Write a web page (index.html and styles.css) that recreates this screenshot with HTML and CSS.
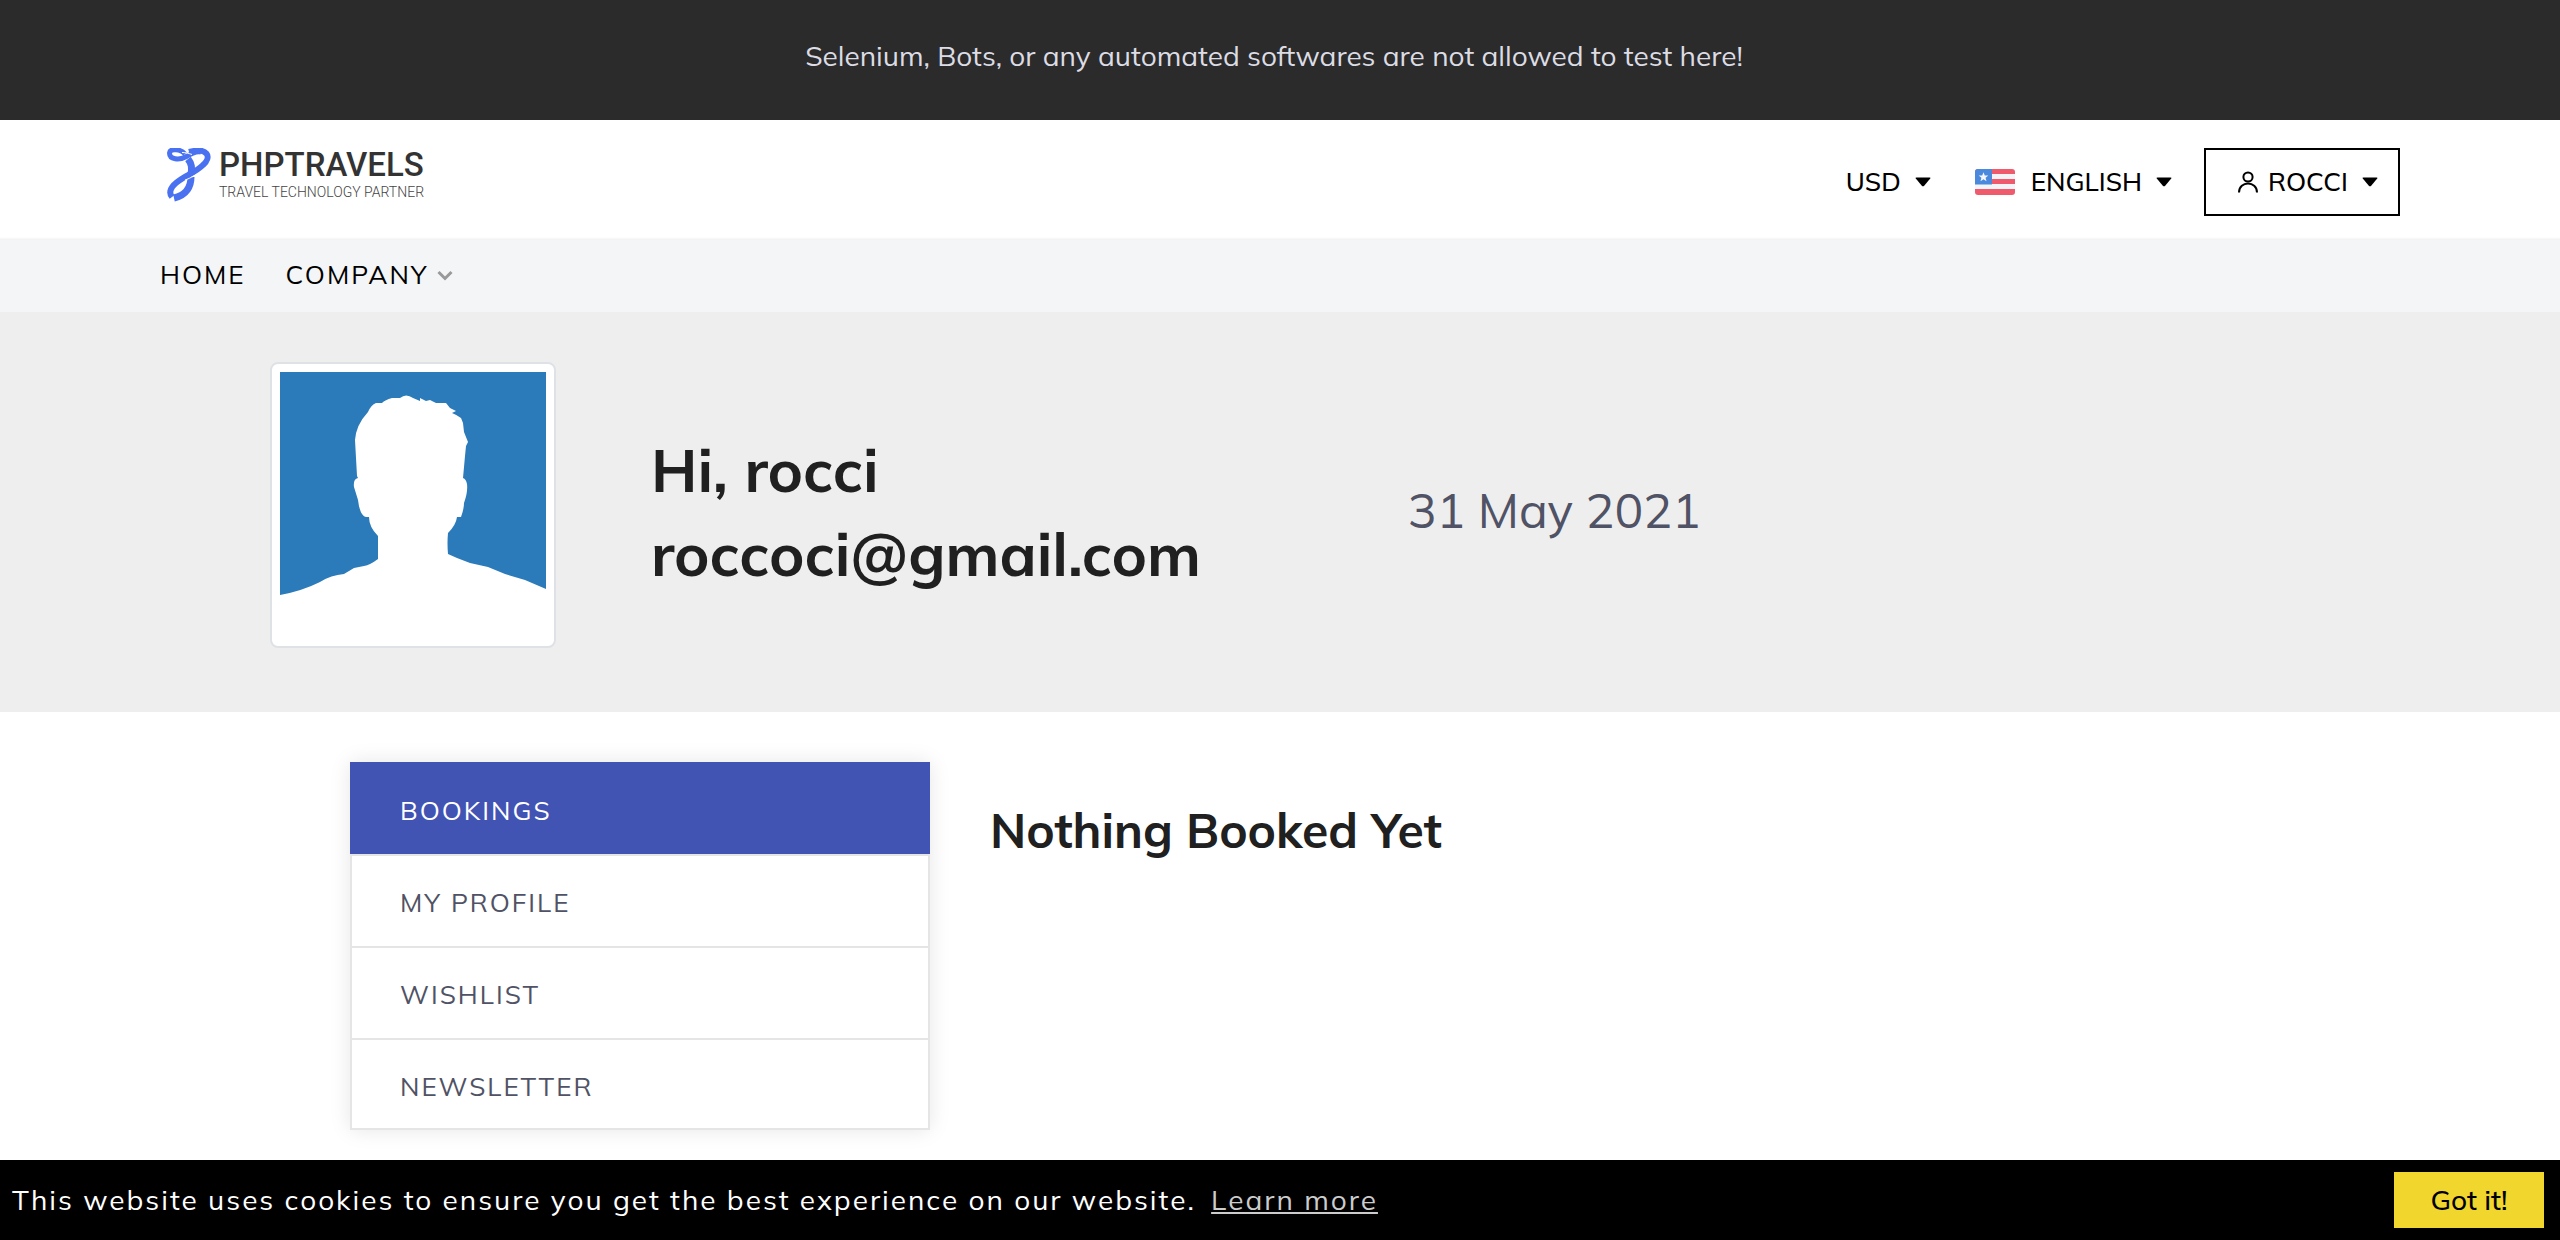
FILE: index.html
```html
<!DOCTYPE html>
<html lang="en">
<head>
<meta charset="utf-8">
<meta name="viewport" content="width=device-width, initial-scale=1">
<title>Bookings - PHPTRAVELS</title>
<link rel="stylesheet" href="styles.css">
</head>
<body>
<svg class="sprite" aria-hidden="true">
  <symbol id="caret" viewBox="0 0 16 10"><path d="M1.500 .5h13q1.500 0 .7 1L9.200 8.700q-1.200 1.100-2.400 0L.8 1.500Q0 .5 1.500.5z" fill="#000"/></symbol>
</svg>

<p class="notice">Selenium, Bots, or any automated softwares are not allowed to test here!</p>

<header class="header">
  <a class="logo" href="#">
    <svg class="logo-mark" viewBox="0 0 44 54" aria-hidden="true">
      <g fill="none" stroke="#4a72f0">
        <path d="M18 6C14 1 3 0 2.500 5c0 7 10 7 16 4C25 5 30 3 34 4" stroke-width="5"/>
        <path d="M22 4C41-1 45 9 36 17 29 24 20 27 13 32 4 38 1 44 5 49" stroke-width="6"/>
        <path d="M21 11c4 5 4 9 3 15" stroke-width="7"/>
        <path d="M24 29c0 9-4 18-17 21" stroke-width="7"/>
      </g>
      <path d="M15 4.500c4 0 7 1 10 2M18 32c3-1 5-2 9-4" fill="none" stroke="#fff" stroke-width="1"/>
    </svg>
    <span class="logo-text">
      <span class="logo-name">PHPTRAVELS</span>
      <span class="logo-tag">TRAVEL TECHNOLOGY PARTNER</span>
    </span>
  </a>
  <div class="tools">
    <button class="tool" type="button">USD <svg class="caret" aria-hidden="true"><use href="#caret"/></svg></button>
    <button class="tool tool-lang" type="button">
      <svg class="flag" viewBox="0 0 40 26" aria-hidden="true">
        <clipPath id="round"><rect width="40" height="26" rx="3"/></clipPath>
        <g clip-path="url(#round)">
          <path d="M0 0h40v26H0z" fill="#ef5b6c"/>
          <path d="M0 5h40v5H0zM0 15h40v5H0z" fill="#f3f4f8"/>
          <path d="M0 0h17v15.500H0z" fill="#4a89dc"/>
          <path d="M8.500 3.200l1.300 3.200 3.500.2-2.700 2.200.9 3.400-3-1.900-3 1.900.9-3.400-2.700-2.200 3.500-.2z" fill="#f5f7fa"/>
        </g>
      </svg>
      ENGLISH <svg class="caret" aria-hidden="true"><use href="#caret"/></svg>
    </button>
    <button class="tool tool-user" type="button">
      <svg class="user" viewBox="0 0 20 22" aria-hidden="true"><g fill="none" stroke="#000" stroke-width="2"><circle cx="10" cy="6" r="4.600"/><path d="M1 21.500c0-12 18-12 18 0"/></g></svg>
      ROCCI <svg class="caret" aria-hidden="true"><use href="#caret"/></svg>
    </button>
  </div>
</header>

<nav class="nav">
  <a href="#">HOME</a>
  <a href="#">COMPANY <svg class="chevron" viewBox="0 0 16 11" aria-hidden="true"><path d="M1.500 2L8 8.500 14.500 2" fill="none" stroke="#999" stroke-width="3"/></svg></a>
</nav>

<section class="hero">
  <svg class="avatar" viewBox="0 0 266 266" role="img" aria-label="Profile picture">
    <path d="M0 0h266v266H0z" fill="#fff"/>
    <path fill="#2b7bba" d="M0 0H266V217L245 208L225 202L208 195L190 191L177 186L168 182Q167 171 168 161Q176 153 177 145H181Q184 137 184 131Q188 120 187 112Q186 107 183 106L185 84L186 74L188 70L184 60L183 51L181 46Q177 43 172 41L176 39L170 36L166 31H156L150 28L146 29L140 26V29L133 26Q126 21 120 26H112Q105 28 102 31H96Q91 33 88 40Q76 53 75 68L77 104L78 106Q73 107 74 115L78 128Q80 144 86 145H89Q89 155 98 164V187Q90 193 84 194L74 196Q69 199 64 202Q51 203 40 210Q22 219 0 223Z"/>
  </svg>
  <h1 class="greeting">Hi, rocci<br>roccoci@gmail.com</h1>
  <time class="date" datetime="2021-05-31">31 May 2021</time>
</section>

<main class="content">
  <ul class="menu">
    <li><a class="active" href="#">BOOKINGS</a></li>
    <li><a href="#">MY PROFILE</a></li>
    <li><a href="#">WISHLIST</a></li>
    <li><a href="#">NEWSLETTER</a></li>
  </ul>
  <h2 class="empty">Nothing Booked Yet</h2>
</main>

<div class="cookies">
  <p>This website uses cookies to ensure you get the best experience on our website. <a href="#">Learn more</a></p>
  <button type="button">Got it!</button>
</div>
</body>
</html>
```
FILE: styles.css
```css
* { box-sizing: border-box; }

body {
  margin: 0;
  background: #fff;
  color: #000;
  font-family: Mulish, Lato, "Noto Sans", sans-serif;
  font-size: 28px;
  line-height: 40px;
}

h1, h2, p, ul { margin: 0; padding: 0; }
a { color: inherit; text-decoration: none; }
button { font: inherit; color: inherit; cursor: pointer; }
svg { flex: none; }

.sprite { display: none; }

.notice {
  padding: 36px 36px 44px 24px;
  background: #2b2b2b;
  color: #dcdce4;
  text-align: center;
}

.header {
  display: flex;
  justify-content: space-between;
  align-items: flex-start;
  min-height: 120px;
  padding: 28px 160px 0;
  background: linear-gradient(to top, #f0f0f0, #fff 3px);
}

.logo { display: flex; gap: 8px; padding-left: 7px; }
.logo-mark { width: 44px; height: 54px; }
.logo-text { display: flex; flex-direction: column; }
.logo-name {
  color: #333;
  font: 500 33px/34px Roboto, sans-serif;
}
.logo-tag {
  color: #444;
  font: 300 14px/20px Roboto, sans-serif;
}

.tools { display: flex; align-items: center; }
.tool {
  display: flex;
  align-items: center;
  height: 68px;
  padding: 0;
  border: 0;
  background: none;
  font-size: 26px;
  font-weight: 500;
}
.tool-lang { margin-left: 44px; }
.tool-user {
  margin-left: 32px;
  padding: 0 20px 0 32px;
  border: 2px solid #000;
}
.caret { width: 16px; height: 10px; margin-left: 14px; }
.flag { width: 40px; height: 26px; margin-right: 16px; }
.user { width: 20px; height: 22px; margin-right: 10px; }

.nav {
  display: flex;
  gap: 40px;
  padding: 15px 160px 17px;
  background: #f4f5f7;
  font-size: 26px;
  letter-spacing: 2px;
}
.nav a { display: flex; align-items: center; }
.chevron { width: 16px; height: 11px; margin-left: 8px; }

.hero {
  display: grid;
  grid-template-columns: 286px 3fr 4fr;
  gap: 95px;
  padding: 50px 270px 64px;
  background: #eee;
}
.avatar {
  width: 286px;
  height: 286px;
  padding: 8px;
  border: 2px solid #dee2e6;
  border-radius: 8px;
  background: #fff;
}
.greeting {
  padding-top: 66px;
  color: #202020;
  font-size: 60px;
  line-height: 84px;
}
.date {
  padding-top: 112px;
  color: #505265;
  font-size: 48px;
  line-height: 72px;
}

.content {
  display: grid;
  grid-template-columns: 580px 1fr;
  align-items: start;
  gap: 60px;
  padding: 50px 350px 110px;
}
.menu {
  border: 2px solid #e5e5e5;
  border-top: 0;
  box-shadow: 0 0 20px rgba(0, 0, 0, .1);
  list-style: none;
  font-size: 26px;
  letter-spacing: 2px;
}
.menu a {
  display: block;
  height: 92px;
  padding: 27px 48px 0;
  border-top: 2px solid #e5e5e5;
  color: #505265;
}
.menu li:last-child a { height: 90px; }
.menu .active {
  margin: 0 -2px;
  padding-left: 50px;
  border-color: #4153b3;
  background: #4153b3;
  color: #fff;
}
.empty {
  padding-top: 32px;
  color: #202020;
  font-size: 48px;
  line-height: 72px;
}

.cookies {
  position: fixed;
  right: 0;
  bottom: 0;
  left: 0;
  display: flex;
  justify-content: space-between;
  align-items: center;
  height: 80px;
  padding: 0 16px 0 12px;
  background: #000;
  color: #fff;
  letter-spacing: 2px;
}
.cookies a {
  margin-left: 6px;
  color: #ccc;
  text-decoration: underline;
}
.cookies button {
  width: 150px;
  height: 56px;
  border: 0;
  background: #f1d62e;
  color: #000;
  font-weight: 500;
  letter-spacing: 0;
}
```
